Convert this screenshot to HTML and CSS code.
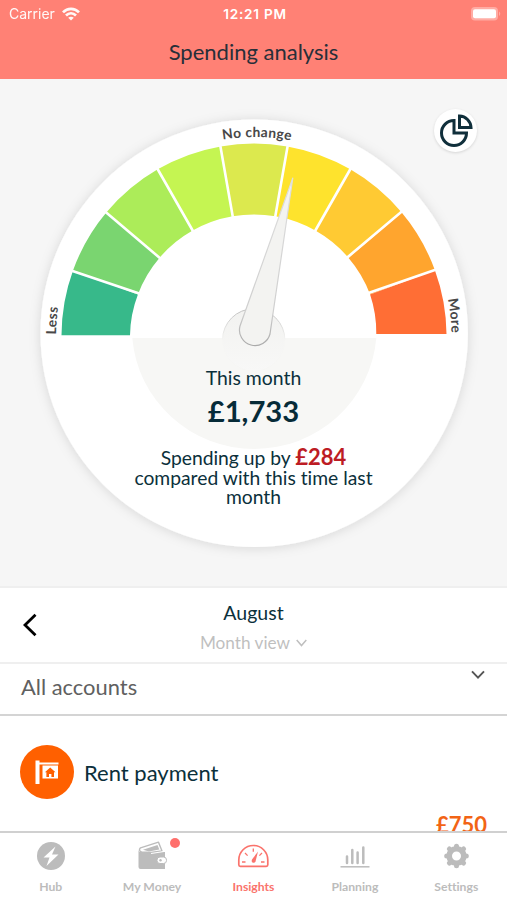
FILE: index.html
```html
<!DOCTYPE html>
<html lang="en">
<head>
<meta charset="utf-8">
<title>Spending analysis</title>
<link rel="stylesheet" href="styles.css">
</head>
<body>
<div class="app">
  <header class="header">
    <div class="status">
      <div class="carrier"><span>Carrier</span>
        <svg width="18" height="14" viewBox="0 0 18 14" fill="none" stroke="#fff" stroke-width="2.7"><path d="M1 5.4C5.5.8 12.500.8 17 5.4M4 8.500C7 5.600 11 5.600 14 8.500"/><path d="M6.200 10.700C8 9.400 10 9.400 11.800 10.700L9 13.600Z" fill="#fff" stroke="none"/></svg>
      </div>
      <div class="clock">12:21 PM</div>
      <div class="power"><svg width="30" height="14" viewBox="0 0 30 14"><rect x="0" y="0" width="27" height="13.500" rx="4" fill="#ffaca4"/><rect x="2" y="2.300" width="23" height="9" rx="2" fill="#fff"/><path d="M28 4.500q2.500 2.200 0 4.500z" fill="#ffaca4"/></svg></div>
    </div>
    <h1>Spending analysis</h1>
  </header>

  <section class="gauge">
    <svg class="dial" width="507" height="508" viewBox="0 80 507 508">
      <defs>
        <filter id="shadow" x="-10%" y="-10%" width="120%" height="120%"><feDropShadow dx="0" dy="1" stdDeviation="6" flood-color="#000" flood-opacity=".13"/></filter>
        <linearGradient id="hub" x1="0" y1="0" x2="0" y2="1"><stop offset="0" stop-color="#f2f2f0"/><stop offset="1" stop-color="#f8f8f7"/></linearGradient>
        <linearGradient id="rim" x1="0" y1="0" x2="0" y2="1"><stop offset="0" stop-color="#bdbdbd"/><stop offset=".5" stop-color="#f6f6f4"/></linearGradient>
        <linearGradient id="edge" x1="0" y1="0" x2="0" y2="1"><stop offset="0" stop-color="#dedede"/><stop offset=".8" stop-color="#cfcfcf"/><stop offset="1" stop-color="#aaa"/></linearGradient>
        <path id="labels" d="M56 336A198.500 199 0 0 1 453 336"/>
        <path id="moreArc" d="M254.500 139A197 197 0 0 1 451.500 336V350"/>
      </defs>
      <circle cx="254.200" cy="333.300" r="213.700" fill="#fff" filter="url(#shadow)"/>
      <path d="M132.300 338A122.500 121 0 0 0 254.500 449A122.500 121 0 0 0 376.300 338Z" fill="#f7f7f5"/>
      <g transform="translate(254 336)">
        <path fill="#37b98a" d="M-192.500-.7A192.500 192.500 0 0 1-180.900-65.800L-116.100-41.600A123.500 121.500 0 0 0-124-.7Z"/>
        <path fill="#7ad570" d="M-180.900-65.800A192.500 192.500 0 0 1-147.500-123.700L-94.600-78.100A123.500 121.500 0 0 0-116.100-41.600Z"/>
        <path fill="#acec59" d="M-147.500-123.700A192.500 192.500 0 0 1-96.300-166.700L-61.800-105.200A123.500 121.500 0 0 0-94.600-78.100Z"/>
        <path fill="#c5f552" d="M-96.300-166.700A192.500 192.500 0 0 1-33.400-189.600L-21.400-119.700A123.500 121.500 0 0 0-61.800-105.200Z"/>
        <path fill="#dce94e" d="M-33.400-189.600A192.500 192.500 0 0 1 33.400-189.600L21.400-119.700A123.500 121.500 0 0 0-21.400-119.700Z"/>
        <path fill="#fee32d" d="M33.400-189.600A192.500 192.500 0 0 1 96.300-166.700L61.800-105.200A123.500 121.500 0 0 0 21.400-119.700Z"/>
        <path fill="#ffca33" d="M96.300-166.700A192.500 192.500 0 0 1 147.500-123.700L94.600-78.100A123.500 121.500 0 0 0 61.800-105.200Z"/>
        <path fill="#ffa52e" d="M147.500-123.700A192.500 192.500 0 0 1 180.900-65.800L116.100-41.600A123.500 121.500 0 0 0 94.600-78.100Z"/>
        <path fill="#ff6e35" d="M180.900-65.800A192.500 192.500 0 0 1 192.500-2L122.300-2A123.500 121.500 0 0 0 116.100-41.600Z"/>
        <path stroke="#fff" stroke-width="2.600" d="M-183-65.500L-114-42.200M-149-124.500L-93-77M-97.300-168.500L-60.500-104M-34-192L-21-118M34-192L21-118M97.300-168.500L60.500-104M149-125.500L92-77.500M183-66.800L113-42.500"/>
      </g>
      <circle cx="253.700" cy="340" r="31.200" fill="url(#hub)" stroke="url(#rim)"/>
      <path d="M292.800 178L240 326A15.500 15.500 0 1 0 270 334Z" fill="#f3f3f1" stroke="url(#edge)" stroke-width="1.200" stroke-linejoin="round"/>
      <g class="arc-text">
        <text><textPath href="#labels" startOffset="1.500">Less</textPath></text>
        <text text-anchor="middle"><textPath href="#labels" startOffset="50.400%">No change</textPath></text>
        <text><textPath href="#moreArc" startOffset="272">More</textPath></text>
      </g>
    </svg>
    <div class="summary">
      <div class="period">This month</div>
      <div class="total">£1,733</div>
      <div class="compare">Spending up by <b>£284</b><br>compared with this time last<br>month</div>
    </div>
    <div class="chart-button"><svg width="34" height="34" viewBox="0 0 34 34" fill="none" stroke="#102f3b" stroke-width="3"><path d="M15 6.500A12.500 12.500 0 1 0 27.500 19H15Z"/><path d="M20.500 2A12 12 0 0 1 32 13.500H20.500Z"/></svg></div>
  </section>

  <section class="month">
    <svg class="back" width="14" height="24" viewBox="0 0 14 24" fill="none" stroke="#000" stroke-width="2.800"><path d="M12.500 1.800L2 12L12.500 22.200"/></svg>
    <div class="month-center">
      <div class="month-name">August</div>
      <div class="month-view">Month view <svg width="11" height="8" viewBox="0 0 11 8" fill="none" stroke="#bfbfbf" stroke-width="1.500"><path d="M.7 1L5.500 6.500L10.300 1"/></svg></div>
    </div>
  </section>

  <section class="accounts">
    <span>All accounts</span>
    <svg width="14" height="10" viewBox="0 0 14 10" fill="none" stroke="#555" stroke-width="1.900"><path d="M1 1.300L7 7.600L13 1.300"/></svg>
  </section>

  <main class="list">
    <div class="item">
      <svg width="54" height="54" viewBox="0 0 54 54"><circle cx="27" cy="27" r="27" fill="#ff6000"/><path fill="#fff" d="M15.500 15.500h4v2h19v2h-19v19.500h-4zM22.500 20.500h15.500v13h-15.500z"/><path fill="#ff6000" d="M30.200 22.500l5.300 4.700h-1.500v4.700h-2.600v-3h-2.400v3h-2.600v-4.700h-1.500z"/></svg>
      <span>Rent payment</span>
    </div>
    <div class="amount">£750</div>
  </main>

  <nav class="tabs">
    <div class="tab"><div class="icon"><svg width="30" height="30" viewBox="0 0 30 30"><circle cx="15" cy="15" r="14" fill="#bcbcbc"/><path fill="#fff" d="M19.500 5.500L7.500 16.500h6L10.500 25L22.500 13.500h-6.500z"/></svg></div><span>Hub</span></div>
    <div class="tab"><div class="icon"><svg width="30" height="30" viewBox="0 0 30 30"><path fill="#bcbcbc" d="M1.500 8.500Q1.500 11 4 11H28V28H3.500Q1.500 28 1.500 26Z"/><path fill="#fff" stroke="#bcbcbc" stroke-width="1.400" stroke-linejoin="round" d="M4.500 11Q1 9.500 3.500 6.800L21.500 1.200L25 10L14 11.500Z"/><path fill="#bcbcbc" d="M6 8.800L20.500 4L22.300 8.500L12 10.500Z"/><path stroke="#fff" stroke-width="1.200" d="M14 12.500L27 10.500"/><rect x="20" y="16" width="9.500" height="6.500" rx="3" fill="#fff" stroke="#bcbcbc"/><circle cx="23.500" cy="19.200" r="1.200" fill="#bcbcbc"/></svg><i class="dot"></i></div><span>My Money</span></div>
    <div class="tab active"><div class="icon"><svg width="32" height="30" viewBox="0 0 32 30" fill="none" stroke="#fa736c" stroke-width="1.700"><path d="M3.300 25.300Q1.800 25.300 1.800 23.800V19A14.500 14.500 0 0 1 30.800 19V23.800Q30.800 25.300 29.300 25.300Z"/><path stroke-width="1.300" d="M5 21h3.500M24 21h3.500M8 12l2.600 2.600M16.300 7.500v3.300M25 12l-2.600 2.600"/><path fill="#fa736c" stroke="none" d="M21 10.500L18.500 20.500Q17.500 22.500 15.500 21.500Q14.200 20.500 15 18.500Z"/></svg></div><span>Insights</span></div>
    <div class="tab"><div class="icon"><svg width="30" height="30" viewBox="0 0 30 30" stroke="#bcbcbc" fill="none"><path stroke-width="2.500" stroke-linecap="round" d="M7 15.500V22M12.300 9V22M17.600 11.500V22M23.300 6.500V22"/><path stroke-width="1.500" d="M.5 25.800H29.500"/></svg></div><span>Planning</span></div>
    <div class="tab"><div class="icon"><svg width="30" height="30" viewBox="-15 -15 30 30"><g fill="none" stroke="#bcbcbc"><circle cx=".5" r="7.300" stroke-width="5.600"/><path transform="translate(.5)" stroke-width="5" stroke-linecap="round" d="M0-9.500v-.3M0 9.500v.3M-9.500 0h-.3M9.500 0h.3M-6.900-6.900l-.2-.2M6.900-6.900l.2-.2M6.900 6.900l.2.2M-6.900 6.900l-.2.2"/></g></svg></div><span>Settings</span></div>
  </nav>
</div>
</body>
</html>
```
FILE: styles.css
```css
* { box-sizing: border-box; }
body { margin: 0; background: #fff; font-family: Lato, sans-serif; color: #0b303b; font-variant-ligatures: none; }
svg { display: block; flex: none; }
.app { width: 507px; height: 900px; overflow: hidden; display: flex; flex-direction: column; }
.header { height: 79px; flex: none; background: #ff8175; }
.status { height: 28px; padding: 0 7px 0 9px; display: grid; grid-template-columns: 1fr auto 1fr; align-items: center; color: #fff; font: 500 13.3px/28px Inter, sans-serif; }
.carrier { display: flex; align-items: center; gap: 7px; font-size: 14px; font-weight: 400; opacity: .95; }
.clock { font-weight: 600; font-size: 13.6px; letter-spacing: .75px; margin-right: -1px; }
.power { justify-self: end; margin-right: -1px; }
h1 { margin: 8px 0 0; font-size: 22px; line-height: 32px; font-weight: 400; text-align: center; color: #272f39; }
.gauge { height: 509px; flex: none; display: grid; background: #f6f6f6; padding-top: 1px; border-bottom: 2px solid #efefef; position: relative; }
.dial, .summary { grid-area: 1 / 1; }
.arc-text { font: 700 13.8px Lato, sans-serif; letter-spacing: .35px; fill: #484848; }
.summary { padding-top: 284px; text-align: center; }
.period { font-size: 19.4px; line-height: 28px; }
.total { font-size: 29.2px; line-height: 38px; font-weight: 700; color: #062b38; }
.compare { margin-top: 18px; font-size: 19.3px; line-height: 19.7px; }
.compare b { color: #bd1c24; font-size: 22px; line-height: 1px; }
.chart-button { position: absolute; top: 30px; right: 30px; width: 43px; height: 43px; border-radius: 50%; background: #fff; box-shadow: 0 1px 3px #0002; display: grid; place-items: center; }
.month { height: 76px; flex: none; display: grid; grid-template-columns: 1fr auto 1fr; border-bottom: 2px solid #efefef; }
.back { margin: 25px 0 0 23px; }
.month-center { text-align: center; padding-top: 10px; }
.month-name { font-size: 19.5px; line-height: 30px; }
.month-view { display: flex; align-items: center; gap: 6px; font-size: 17.2px; line-height: 30px; color: #bfbfbf; }
.accounts { height: 52px; flex: none; display: flex; justify-content: space-between; padding: 6px 22px 0 21px; border-bottom: 2px solid #d4d4d4; color: #606060; font-size: 21.9px; line-height: 34px; }
.list { flex: 1; min-height: 0; overflow: hidden; }
.item { display: flex; align-items: center; gap: 10px; margin: 29px 20px 0; height: 54px; font-size: 22px; }
.amount { margin: 10px 20px 0; text-align: right; color: #f26415; font-size: 22px; line-height: 32px; font-weight: 700; }
.tabs { height: 69px; flex: none; display: grid; grid-template-columns: repeat(5, 1fr); background: #fff; border-top: 2px solid #d0d0d0; color: #bcbcbc; padding-top: 8px; font-size: 12.2px; line-height: 18px; font-weight: 700; }
.tab { display: flex; flex-direction: column; align-items: center; gap: 7px; }
.active { color: #fa736c; }
.icon { position: relative; }
.dot { position: absolute; width: 10px; height: 10px; right: -13px; top: -3px; border-radius: 50%; background: #ff6f6c; }
```
